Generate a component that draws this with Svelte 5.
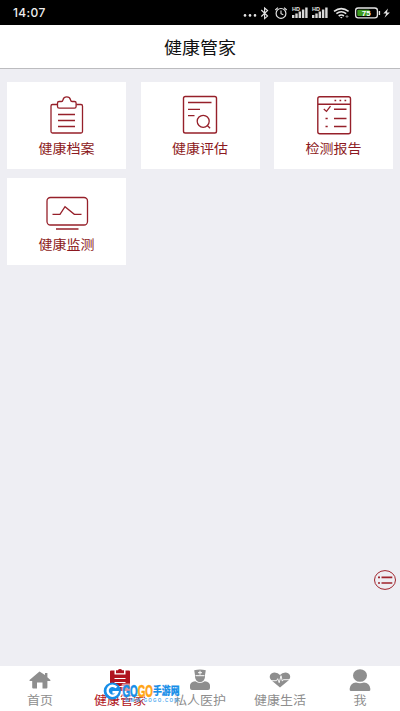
<script>
  const cards = [
    { id: 'record', label: '健康档案' },
    { id: 'assess', label: '健康评估' },
    { id: 'report', label: '检测报告' },
    { id: 'monitor', label: '健康监测' }
  ];
  const tabs = [
    { id: 'home', label: '首页' },
    { id: 'manager', label: '健康管家', active: true },
    { id: 'doctor', label: '私人医护' },
    { id: 'life', label: '健康生活' },
    { id: 'me', label: '我' }
  ];
</script>

<div class="screen">
  <div class="status">
    <span class="time">14:07</span>
    <svg class="sys" width="160" height="25" viewBox="240 0 160 25" fill="none" stroke="#e4e4e4">
      <g fill="#e4e4e4" stroke="none">
        <circle cx="245" cy="15.4" r="1.3" /><circle cx="250" cy="15.4" r="1.3" /><circle cx="255" cy="15.4" r="1.3" />
      </g>
      <path d="M261.3 10l6.3 6-3 2.6V8l3 2.5-6.3 6" stroke-width="1.1" />
      <circle cx="281" cy="13.4" r="4.9" stroke-width="1.2" />
      <path d="M281 10.5v3.2l2.3 1M275.3 10l2.6-2.3M286.7 10l-2.6-2.3" stroke-width="1.1" />
      {#each [292, 312] as x}
        <text {x} y="11" class="hd">HD</text>
        <g fill="#d8d8d8" stroke="none">
          <rect {x} y="15" width="2.4" height="3" /><rect x={x + 3.3} y="13.5" width="2.4" height="4.5" />
          <rect x={x + 6.6} y="11.5" width="2.4" height="6.5" /><rect x={x + 9.9} y="9.5" width="2.4" height="8.5" />
          <rect x={x + 13.2} y="7.5" width="2.4" height="10.5" />
        </g>
      {/each}
      <path d="M334 11.4q7.3-5.6 14.6 0M336.4 13.7q4.9-3.8 9.8 0M338.7 16q2.6-2 5.2 0" stroke-width="1.6" />
      <path d="M340 17h2.6l-1.3 1.4z" fill="#e4e4e4" stroke="none" />
      <path d="M347 15v3M345.5 16.5h3" stroke="#999" stroke-width=".8" />
      <rect x="355.6" y="8" width="21.8" height="9.800" rx="2.6" stroke-width="1.3" />
      <rect x="357.3" y="9.700" width="12.500" height="6.400" rx="1" fill="#3d9a20" stroke="none" />
      <path d="M379.400 11v4" stroke-width="1.4" />
      <text x="361.8" y="16" class="pct">75</text>
      <path d="M388 8.4l-4.7 5h3l-1.8 4.4 5.4-5.4h-3z" fill="#e4e4e4" stroke="none" />
    </svg>
  </div>

  <header><span>健康管家</span></header>

  <main>
    {#each cards as c}
      <button class="card">
        {#if c.id === 'record'}
          <svg class="ico" viewBox="36.5 92 60 46">
            <path d="M57.2 104.5H52q-1.5 0-1.5 1.5v25.5q0 1.500 1.500 1.500h28.500q1.500 0 1.500-1.500V106q0-1.500-1.500-1.500h-4.700" />
            <path d="M58.600 101.500h2.300q1.300 0 1.600-1.700a3.900 3.900 0 0 1 7.500 0q.3 1.700 1.600 1.700H74q1.600 0 1.600 1.600v3.500q0 1.600-1.600 1.600H58.600q-1.600 0-1.600-1.600v-3.500q0-1.600 1.600-1.600z" />
            <path d="M57.500 114.500h17M57.500 120.500h17M57.500 126.500h17" />
          </svg>
        {:else if c.id === 'assess'}
          <svg class="ico" viewBox="170 92 60 46">
            <rect x="183.500" y="96.500" width="33" height="36.500" rx="1.800" stroke-width="1.400" />
            <path d="M188 102.500h23.500M188 109.300h12M188 115.600h6.500" />
            <circle cx="203.200" cy="121.300" r="6" />
            <path d="M207.300 125.500l2.800 2.800" />
          </svg>
        {:else if c.id === 'report'}
          <svg class="ico" viewBox="303.500 92 60 46">
            <rect x="317.300" y="96.800" width="32.700" height="37" rx="2" stroke-width="1.400" />
            <path d="M317.500 104.300H350M333.500 109.300H346M333.500 118.500H346M333.500 126.500H346M325 118.500h2.200M325 126.500h2.200" stroke-width="1.400" />
            <path d="M334 100.500h1.700M339 100.500h1.700M344 100.500h1.700" />
            <path d="M323.300 109l2.700 2.400 4-5.200" />
          </svg>
        {:else}
          <svg class="ico" viewBox="36.500 188 60 46">
            <rect x="46.500" y="197.500" width="40.500" height="27.500" rx="3.500" />
            <path d="M52 214.300h7.500l5-7.600 9.300 7.600H81M55.500 229h22.500" />
          </svg>
        {/if}
        <span>{c.label}</span>
      </button>
    {/each}
  </main>

  <button class="fab" aria-label="menu">
    <svg width="23" height="20" viewBox="373 570 23 20" fill="none" stroke="#a0242c">
      <ellipse cx="385" cy="580" rx="10.500" ry="9.400" />
      <path d="M381.500 577.400h10.800M381.500 583h10.800M378 577.400h2M378 583h2" stroke-width="1.600" />
    </svg>
  </button>

  <nav>
    {#each tabs as t}
      <button class="tab" class:active={t.active}>
        <svg width="30" height="26" viewBox="0 0 30 26" fill="currentColor">
          {#if t.id === 'home'}
            <path d="M14.500 5.600L4.500 13.900q-.4 1.100.7 1.100H7.200v6.500q0 1 1 1H12v-6h5.500v6h3.900q1 0 1-1V15h2.300q1.200 0 .7-1.100l-3-2.600V7h-2.400v2z" />
          {:else if t.id === 'manager'}
            <path d="M6 4.500h3.500v4h11v-4H24q1 0 1 1V25H5V5.500q0-1 1-1z" />
            <path d="M11 4.200h2Q13.200 3 15 3t2 1.200h2v3h-8z" />
            <path d="M9.500 12.500h11M9.500 16.500h11M9.500 20.500h11" stroke="#fff" stroke-width="1.200" />
          {:else if t.id === 'doctor'}
            <path d="M9.200 4.300Q15 2.500 20.800 4.300L20 9v2q-.6 4.700-5 5.200-4.400-.5-5-5.200V9z" />
            <path d="M5 22v-2.500q0-3.400 5.200-4.300 4.800 3.500 9.600 0Q25 16.100 25 19.500V22q0 2-2 2H7q-2 0-2-2z" />
            <path d="M13 6.700h4M15 4.700v4M10.500 9.700h9" stroke="#fff" stroke-width="1" />
          {:else if t.id === 'life'}
            <path d="M15 21.500L6.300 14.200C3 10.500 5.500 6.500 9.600 6.500q3.500 0 5.400 2.600 1.900-2.600 5.400-2.600c4.100 0 6.600 4 3.300 7.700z" />
            <path d="M4 14.700h7.500l1.200-2 1.500 4 1.800-7 1.300 5.400 1-1.400h7.700" fill="none" stroke="#fff" stroke-width=".9" />
          {:else}
            <ellipse cx="15" cy="9.500" rx="7" ry="6.300" />
            <path d="M4.700 24v-1.500Q5.500 17 11 16.500q4 1.300 8 0 5.500.5 6.300 6V24q0 1-1.300 1H6q-1.300 0-1.300-1z" />
          {/if}
        </svg>
        <span>{t.label}</span>
      </button>
    {/each}
    <div class="mark">
      <svg width="84" height="26" viewBox="102 680 84 26">
        <rect x="121.500" y="683.500" width="59" height="13.500" rx="2" fill="#fff" opacity=".55" />
        <circle cx="112.300" cy="691" r="8.600" fill="#168ee8" />
        <path d="M116.500 687.600a5 5 0 1 0 .8 4.700h-4.800" fill="none" stroke="#fff" stroke-width="2.400" />
        <text class="logo" x="122.500" y="696.500" textLength="30.500" lengthAdjust="spacingAndGlyphs"><tspan class="blue">GO</tspan><tspan class="gold">GO</tspan></text>
        <text class="cn blue" x="153" y="695.300" textLength="26.500" lengthAdjust="spacingAndGlyphs">手游网</text>
        <text class="url" x="125" y="702" textLength="53">WWW.GOGO.COM</text>
      </svg>
    </div>
  </nav>
</div>

<style>
  .screen {
    position: relative;
    display: flex;
    flex-direction: column;
    width: 400px;
    height: 711px;
    overflow: hidden;
    background: #eeeef3;
    font-family: 'Liberation Sans', 'Noto Sans CJK SC', sans-serif;
  }
  button {
    border: 0;
    padding: 0;
    background: none;
    font: inherit;
    color: inherit;
  }
  svg { display: block; flex: none; }
  .status {
    display: flex;
    justify-content: space-between;
    height: 25px;
    background: #000;
    color: #eee;
  }
  .time {
    padding-left: 13px;
    font: 500 12px/26px Inter, sans-serif;
    letter-spacing: 0.35px;
  }
  .hd { font: 700 5.500px 'Liberation Sans', sans-serif; fill: #e4e4e4; stroke: none; }
  .pct { font: 700 8px 'Liberation Sans', sans-serif; fill: #fff; stroke: none; }
  header {
    box-sizing: border-box;
    height: 44px;
    border-bottom: 1px solid #bcbcbf;
    background: #fff;
    color: #111;
    font-size: 18px;
    line-height: 46px;
    text-align: center;
  }
  header span, .card span, .tab span {
    display: block;
    transform: scaleY(0.92);
  }
  main {
    flex: 1;
    display: grid;
    grid-template-columns: repeat(3, 119px);
    grid-auto-rows: 87px;
    gap: 9px 14.500px;
    padding: 13px 7px;
  }
  .card {
    display: flex;
    flex-direction: column;
    align-items: center;
    padding-top: 10px;
    background: #fff;
    color: #8c1820;
    font-size: 14px;
    line-height: 21px;
  }
  .ico {
    width: 60px;
    height: 46px;
    fill: none;
    stroke: #96202a;
    stroke-width: 1.300;
  }
  .fab { position: absolute; left: 373px; top: 570px; }
  nav {
    position: relative;
    display: flex;
    height: 45px;
    background: #fff;
  }
  .tab {
    flex: 1;
    display: flex;
    flex-direction: column;
    align-items: center;
    color: #8e8e8e;
    font-size: 13px;
    line-height: 18px;
    white-space: nowrap;
  }
  .active { color: #b01420; }
  .mark { position: absolute; left: 102px; top: 14px; }
  .logo { font: 700 17px 'Liberation Sans', sans-serif; stroke-width: 0.6px; }
  .cn { font: 900 11px 'Noto Sans CJK SC', sans-serif; stroke-width: 0.2px; }
  .blue { fill: #168ee8; stroke: #168ee8; }
  .gold { fill: #ffa414; stroke: #ffa414; }
  .url { font: 700 4.500px 'Liberation Sans', sans-serif; fill: #56acef; }
</style>
